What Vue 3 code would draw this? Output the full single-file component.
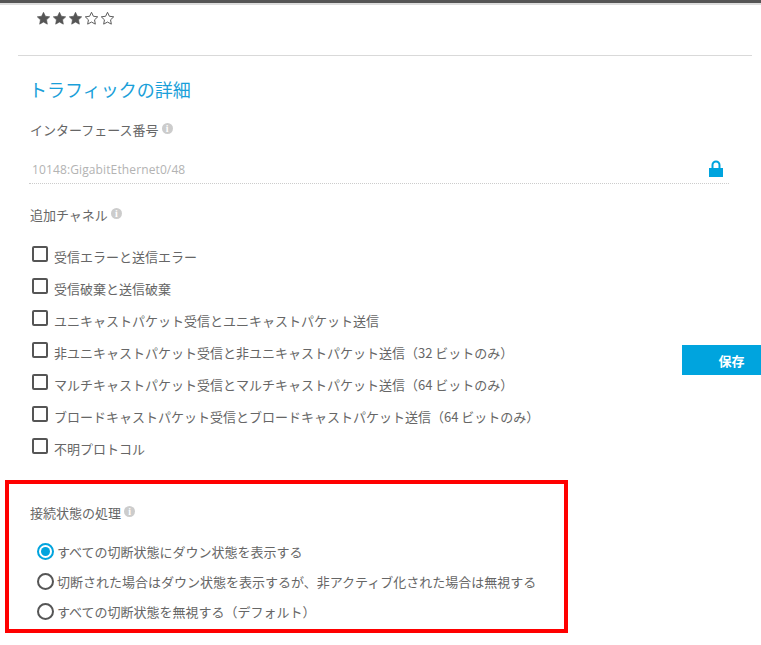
<template>
  <div class="page">
    <div class="top-bar"></div>
    <div class="stars">
      <svg v-for="n in 5" :key="n" class="star" viewBox="0 0 14 14">
        <path
          d="M7 1.2l1.75 3.7 4.05.55-2.95 2.8.73 4L7 10.3l-3.58 1.95.73-4L1.2 5.45l4.05-.55z"
          :class="n <= 3 ? 'star-on' : 'star-off'"
        />
      </svg>
    </div>
    <hr class="divider" />

    <div class="section">
      <h2 class="title">トラフィックの詳細</h2>

      <div class="label">インターフェース番号<span class="info">i</span></div>
      <div class="field">
        <span class="field-value">10148:GigabitEthernet0/48</span>
        <svg class="lock" viewBox="0 0 14 17">
          <path d="M3.500 9V5a3.500 3.500 0 0 1 7 0V9" fill="none" stroke="#00a4de" stroke-width="2" />
          <rect x="0" y="8" width="14" height="9" fill="#00a4de" />
        </svg>
      </div>

      <div class="label channel-label">追加チャネル<span class="info">i</span></div>
      <div class="checks">
        <label v-for="item in channels" :key="item" class="check-row">
          <span class="checkbox"></span>
          <span>{{ item }}</span>
        </label>
      </div>
    </div>

    <div class="state-box">
      <div class="label">接続状態の処理<span class="info">i</span></div>
      <div class="radios">
        <label v-for="(item, i) in states" :key="item" class="radio-row">
          <span class="radio" :class="{ on: i === selected }"></span>
          <span>{{ item }}</span>
        </label>
      </div>
    </div>

    <button class="save">保存</button>
  </div>
</template>

<script setup>
import { ref } from 'vue'

const channels = [
  '受信エラーと送信エラー',
  '受信破棄と送信破棄',
  'ユニキャストパケット受信とユニキャストパケット送信',
  '非ユニキャストパケット受信と非ユニキャストパケット送信（32 ビットのみ）',
  'マルチキャストパケット受信とマルチキャストパケット送信（64 ビットのみ）',
  'ブロードキャストパケット受信とブロードキャストパケット送信（64 ビットのみ）',
  '不明プロトコル'
]

const states = [
  'すべての切断状態にダウン状態を表示する',
  '切断された場合はダウン状態を表示するが、非アクティブ化された場合は無視する',
  'すべての切断状態を無視する（デフォルト）'
]

const selected = ref(0)
</script>

<style scoped>
.page {
  position: relative;
  width: 761px;
  height: 645px;
  overflow: hidden;
  background: #fff;
  color: #666;
  font-family: "Noto Sans CJK JP", "Open Sans", sans-serif;
  font-size: 13px;
}
.top-bar {
  height: 3px;
  background: #555;
  border-bottom: 2px solid #ddd;
}
.stars {
  display: flex;
  gap: 1px;
  padding: 6px 0 0 36px;
  height: 15px;
}
.star {
  width: 15px;
  height: 15px;
}
.star-on {
  fill: #555;
  stroke: #555;
  stroke-width: 0.6;
}
.star-off {
  fill: #fff;
  stroke: #555;
  stroke-width: 0.9;
}
.divider {
  margin: 29px 9px 0 18px;
  border: 0;
  border-top: 1px solid #d9d9d9;
}
.section {
  padding: 0 0 0 30px;
}
.title {
  margin: 20px 0 0 -1px;
  font-size: 18px;
  font-weight: 400;
  line-height: 26px;
  color: #1a9fd9;
}
.label {
  display: flex;
  align-items: center;
  line-height: 20px;
  color: #666;
}
.section > .label:first-of-type {
  margin-top: 18px;
}
.info {
  width: 11px;
  height: 11px;
  margin: -3px 0 0 3px;
  border-radius: 50%;
  background: #ccc;
  color: #fff;
  font-family: "Liberation Serif", serif;
  font-size: 10px;
  font-weight: 700;
  line-height: 11px;
  text-align: center;
}
.field {
  display: flex;
  align-items: center;
  justify-content: space-between;
  width: 700px;
  height: 31px;
  margin: 13px 0 0 -1px;
  padding-top: 3px;
  border-bottom: 1px dotted #ccc;
  box-sizing: border-box;
}
.field-value {
  margin-left: 3px;
  font-family: "Open Sans", sans-serif;
  font-size: 12px;
  letter-spacing: 0.12px;
  color: #b3b3b3;
}
.lock {
  width: 14px;
  height: 17px;
  margin: 0 6px 3px 0;
}
.channel-label {
  margin-top: 21px;
}
.checks {
  display: flex;
  flex-direction: column;
  margin-top: 15px;
}
.check-row {
  display: flex;
  align-items: center;
  height: 32px;
  padding-left: 2px;
}
.checkbox {
  width: 12px;
  height: 12px;
  margin: -5px 6px 0 0;
  border: 2px solid #555;
  border-radius: 2px;
  flex: none;
}
.state-box {
  width: 534px;
  height: 126px;
  margin: 16px 0 0 5px;
  padding: 19px 0 0 21px;
  border: 4px solid #f00;
}
.radios {
  display: flex;
  flex-direction: column;
  margin-top: 13px;
}
.radio-row {
  display: flex;
  align-items: center;
  height: 30px;
  padding-left: 7px;
}
.radio {
  position: relative;
  width: 13px;
  height: 13px;
  margin-right: 3px;
  border: 2px solid #555;
  border-radius: 50%;
  flex: none;
}
.radio.on {
  border-color: #00a4de;
}
.radio.on::after {
  content: "";
  position: absolute;
  inset: 2px;
  border-radius: 50%;
  background: #00a4de;
}
.save {
  position: absolute;
  top: 345px;
  left: 682px;
  width: 79px;
  height: 30px;
  padding: 0 0 0 20px;
  border: 0;
  background: #00a4de;
  color: #fff;
  font-family: inherit;
  font-size: 13px;
  font-weight: 700;
}
</style>
